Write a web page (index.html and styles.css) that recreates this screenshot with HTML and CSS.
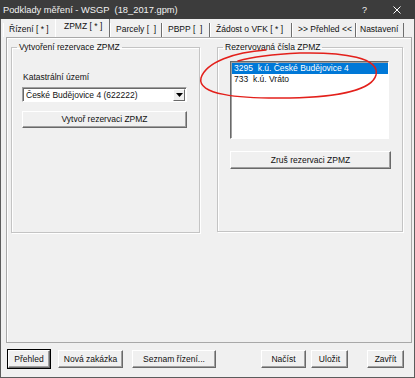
FILE: index.html
```html
<!DOCTYPE html>
<html lang="cs">
<head>
<meta charset="utf-8">
<title>Podklady měření - WSGP</title>
<link rel="stylesheet" href="styles.css">
</head>
<body>
<div class="window">
  <div class="titlebar">
    <span class="title">Podklady měření - WSGP&nbsp; (18_2017.gpm)</span>
    <span class="help">?</span>
    <svg class="close" width="8" height="8" viewBox="0 0 8 8"><path d="M0.5 0.5 L7.5 7.5 M7.5 0.5 L0.5 7.5" stroke="#fff" stroke-width="1"/></svg>
  </div>
  <div class="tabs">
    <div class="tab t1">Řízení [ * ]</div>
    <div class="tab t2 active">ZPMZ [ * ]</div>
    <div class="tab t3">Parcely [&nbsp; ]</div>
    <div class="tab t4">PBPP [&nbsp; ]</div>
    <div class="tab t5">Žádost o VFK [ * ]</div>
    <div class="tab t6">&gt;&gt; Přehled &lt;&lt;</div>
    <div class="tab t7">Nastavení</div>
  </div>
  <div class="panel">
    <fieldset class="group g1">
      <legend>Vytvoření rezervace ZPMZ</legend>
      <div class="gbody b1">
        <div class="label">Katastrální území</div>
        <div class="combo">
          <span class="combo-text">České Budějovice 4 (622222)</span>
          <span class="drop"><svg width="7" height="4" viewBox="0 0 7 4"><path d="M0 0 H7 L3.5 4 Z" fill="#000"/></svg></span>
        </div>
        <div class="btn wide">Vytvoř rezervaci ZPMZ</div>
      </div>
    </fieldset>
    <fieldset class="group g2">
      <legend>Rezervovaná čísla ZPMZ</legend>
      <div class="gbody b2">
        <div class="list">
          <div class="item sel">3295&nbsp; k.ú. České Budějovice 4</div>
          <div class="item">733&nbsp; k.ú. Vráto</div>
        </div>
        <div class="btn wide w2">Zruš rezervaci ZPMZ</div>
      </div>
    </fieldset>
  </div>
  <div class="footer">
    <div class="btn default f1">Přehled</div>
    <div class="btn f2">Nová zakázka</div>
    <div class="btn f3">Seznam řízení...</div>
    <div class="btn f4">Načíst</div>
    <div class="btn f5">Uložit</div>
    <div class="btn f6">Zavřít</div>
  </div>
  <svg class="annot" width="415" height="378" viewBox="0 0 415 378">
    <path d="M266 50 C235 52 206 62 201 78 C197 94 236 99 290 98 C338 97 372 90 376 75 C380 58 345 52 300 53 C278 54 255 56 238 61" fill="none" stroke="#e3201b" stroke-width="1.5" stroke-linecap="round"/>
  </svg>
</div>
</body>
</html>
```

FILE: styles.css
```css
* { box-sizing: border-box; }
html, body { margin: 0; padding: 0; }
body {
  width: 415px;
  height: 378px;
  background: #f0f0f0;
  font-family: "Liberation Sans", Arial, sans-serif;
  font-size: 8.5px;
  color: #111;
  overflow: hidden;
}
.window {
  position: relative;
  width: 415px;
  height: 378px;
  display: flex;
  flex-direction: column;
  border-left: 1px solid #5c5c5c;
  border-right: 1px solid #5c5c5c;
  border-bottom: 1px solid #5c5c5c;
  background: #f0f0f0;
}
.titlebar {
  height: 19px;
  flex: none;
  background: #3c3c3c;
  color: #f2f2f2;
  display: flex;
  align-items: center;
  padding-left: 3px;
  margin-left: -1px;
  margin-right: -1px;
}
.title { font-size: 9.3px; flex: 1; }
.help { font-size: 9px; width: 8px; margin-right: 23px; }
.close { margin-right: 14px; }

.tabs {
  height: 18px;
  flex: none;
  display: flex;
  align-items: flex-end;
  padding-left: 2px;
}
.tab {
  height: 14px;
  line-height: 13px;
  padding: 0 5px 0 5px;
  border-right: 1px solid #6e6e6e;
  border-left: 1px solid #fff;
  white-space: nowrap;
}
.tab.active {
  height: 18px;
  line-height: 13px;
  padding-top: 1px;
}
.t1 { width: 52px; padding-left: 5px; border-right-color: #f0f0f0; }
.t2 { width: 55px; padding-left: 8px; }
.t3 { width: 52px; }
.t4 { width: 48px; }
.t5 { width: 82px; }
.t6 { width: 64px; }
.t7 { width: 48px; padding-left: 3px; }

.panel {
  flex: none;
  height: 306px;
  margin: 0 2px 0 5px;
  border: 1px solid #a8a8a8;
  box-shadow: inset 1px 1px 0 #fff;
  display: flex;
  align-items: flex-start;
  padding: 3px 0 0 4px;
}
.group {
  margin: 0;
  padding: 0;
  border: 1px solid #c4c4c4;
  box-shadow: 1px 1px 0 #fff, inset 1px 1px 0 #fff;
  min-width: 0;
}
.group legend {
  margin-left: 5px;
  padding: 0 2px;
  line-height: 12px;
  font-size: 8.5px;
}
.g1 { width: 189px; height: 192px; }
.g2 { width: 186px; height: 191px; margin-left: 17px; }
.gbody { display: flex; flex-direction: column; }
.b1 { padding: 19px 0 0 10px; }
.b2 { padding: 8px 0 0 12px; }

.label { line-height: 11px; padding-left: 1px; }
.combo {
  margin-top: 4px;
  width: 165px;
  height: 15px;
  background: #fff;
  border: 1px solid;
  border-color: #a0a0a0 #fff #fff #a0a0a0;
  box-shadow: inset 1px 1px 0 #696969;
  display: flex;
  align-items: center;
  padding-left: 3px;
}
.combo-text { flex: 1; line-height: 12px; }
.drop {
  width: 12px;
  height: 12px;
  margin-right: 1px;
  background: #f0f0f0;
  border: 1px solid;
  border-color: #fff #696969 #696969 #fff;
  display: flex;
  align-items: center;
  justify-content: center;
}
.btn {
  height: 17px;
  line-height: 15px;
  text-align: center;
  background: #f0f0f0;
  border: 1px solid;
  border-color: #fff #696969 #696969 #fff;
  box-shadow: inset -1px -1px 0 #a0a0a0;
  white-space: nowrap;
}
.wide { width: 165px; margin-top: 9px; }
.w2 { width: 161px; margin-top: 12px; height: 18px; line-height: 16px; }

.list {
  width: 159px;
  height: 78px;
  background: #fff;
  border: 1px solid;
  border-color: #696969 #fff #fff #696969;
  box-shadow: inset 1px 1px 0 #a0a0a0;
  padding: 1px 0 0 1px;
}
.item { line-height: 11px; padding-left: 2px; white-space: nowrap; }
.item.sel { background: #0078d7; color: #fff; }

.footer {
  flex: none;
  display: flex;
  padding: 7px 0 0 6px;
}
.footer .btn { height: 18px; line-height: 16px; }
.default { outline: 1px solid #000; }
.f1 { width: 42px; margin-left: 1px; }
.f2 { width: 65px; margin-left: 8px; }
.f3 { width: 84px; margin-left: 9px; }
.f4 { width: 45px; margin-left: 45px; }
.f5 { width: 37px; margin-left: 5px; }
.f6 { width: 37px; margin-left: 19px; }

.annot { position: absolute; left: -1px; top: 0; pointer-events: none; }
```
